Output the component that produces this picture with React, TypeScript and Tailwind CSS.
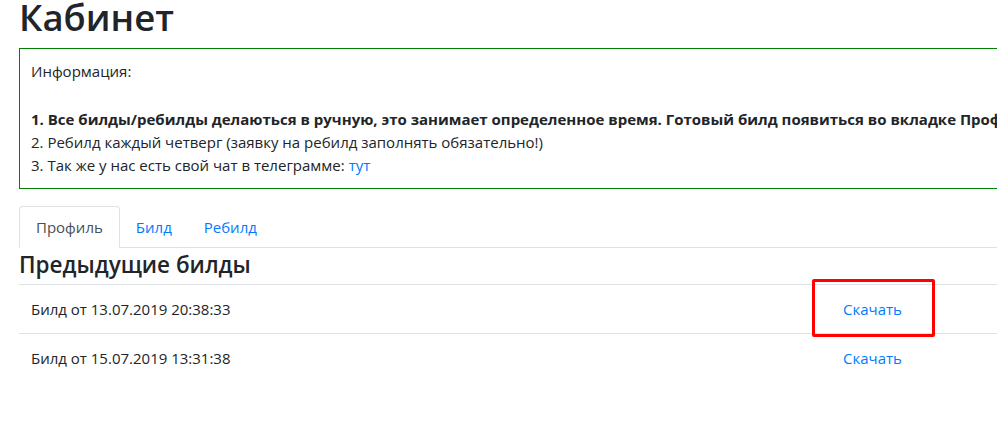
export default function App() {
  return (
    <div className="w-[997px] h-[428px] overflow-hidden bg-white text-[#212529]" style={{ fontFamily: '"Open Sans", "Noto Sans", sans-serif' }}>
      <div className="pl-[19px] w-[1160px]">
        <h1 className="text-[36.5px] leading-[46px] font-semibold -mt-[6px] h-[54px]">Кабинет</h1>
        <div className="border border-[#008000] px-[11px] pt-[11px] pb-[11px] text-[15px] leading-[23px]">
          <div>Информация:</div>
          <div className="mt-[25px] font-bold">1. Все билды/ребилды делаються в ручную, это занимает определенное время. Готовый билд появиться во вкладке Профиль</div>
          <div>2. Ребилд каждый четверг (заявку на ребилд заполнять обязательно!)</div>
          <div>3. Так же у нас есть свой чат в телеграмме: <a className="text-[#007bff]">тут</a></div>
        </div>
        <div className="mt-[17px] flex border-b border-[#dee2e6] text-[15px] leading-[24px]">
          <div className="-mb-px h-[42px] px-[16px] flex items-center border border-[#dee2e6] border-b-white rounded-t-[4px] text-[#495057] bg-white">Профиль</div>
          <div className="h-[41px] px-[16px] flex items-center text-[#007bff]">Билд</div>
          <div className="h-[41px] px-[16px] flex items-center text-[#007bff]">Ребилд</div>
        </div>
        <h4 className="text-[22.5px] leading-[34px] mb-[2px] font-semibold">Предыдущие билды</h4>
        <div className="relative border-t border-[#dee2e6] text-[15px]">
          <div className="flex h-[49px] items-center border-b border-[#dee2e6]">
            <div className="w-[812px] pl-[12px]">Билд от 13.07.2019 20:38:33</div>
            <div className="pl-[12px] text-[#007bff]">Скачать</div>
          </div>
          <div className="flex h-[49px] items-center">
            <div className="w-[812px] pl-[12px]">Билд от 15.07.2019 13:31:38</div>
            <div className="pl-[12px] text-[#007bff]">Скачать</div>
          </div>
          <div className="absolute left-[793px] top-[-6px] w-[123px] h-[58px] border-[3px] border-[#ff0000] rounded-[2px]"></div>
        </div>
      </div>
    </div>
  );
}
